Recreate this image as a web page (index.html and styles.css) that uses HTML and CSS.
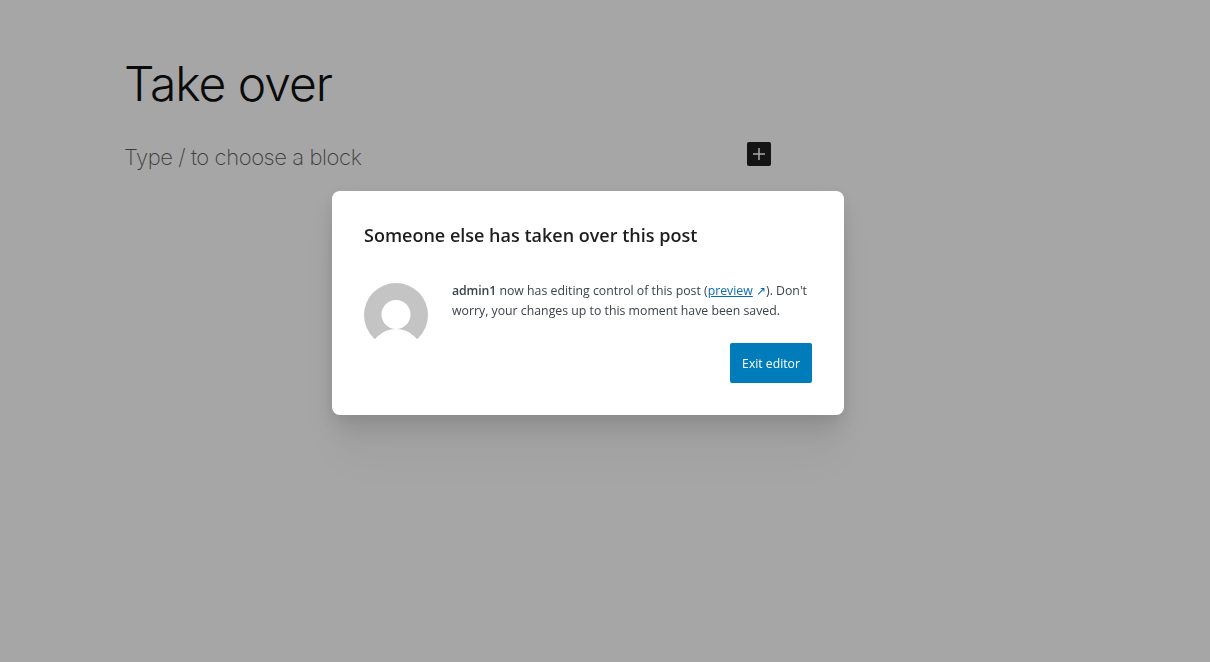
FILE: index.html
```html
<!DOCTYPE html>
<html lang="en">
<head>
<meta charset="utf-8">
<title>Take over</title>
<link rel="stylesheet" href="styles.css">
</head>
<body>
<main class="editor">
  <h1 class="post-title">Take over</h1>
  <div class="block-row">
    <p class="placeholder">Type / to choose a block</p>
    <button class="inserter" aria-label="Add block">
      <svg width="24" height="24" viewBox="0 0 24 24"><path d="M11.25 6h1.5v5.25H18v1.5h-5.25V18h-1.5v-5.25H6v-1.5h5.25z" fill="currentColor"/></svg>
    </button>
  </div>
</main>
<div class="overlay">
  <section class="modal">
    <h2 class="modal-title">Someone else has taken over this post</h2>
    <div class="modal-body">
      <svg class="avatar" width="64" height="64" viewBox="0 0 64 64">
        <circle cx="32" cy="32" r="32" fill="#c4c4c4"/>
        <circle cx="32" cy="31.5" r="14.5" fill="#fff"/>
        <circle cx="32" cy="73" r="27" fill="#fff"/>
      </svg>
      <p class="message"><strong>admin1</strong> now has editing control of this post (<a class="preview" href="#">preview</a> <span class="ext">↗</span>). Don't worry, your changes up to this moment have been saved.</p>
    </div>
    <div class="actions"><button class="exit">Exit editor</button></div>
  </section>
</div>
</body>
</html>
```
FILE: styles.css
```css
html, body { margin: 0; height: 100%; }
body { background: #a6a6a6; overflow: hidden; font-family: "Open Sans", "Noto Sans", sans-serif; }
.editor { padding: 54px 0 0 124px; width: 647px; }
.post-title { margin: 0; font: 300 48px/60px Inter, sans-serif; letter-spacing: -1.05px; color: #0a0a0a; }
.block-row { display: flex; align-items: center; justify-content: space-between; margin-top: 16px; height: 54px; }
.placeholder { margin: 0; font: 200 22px/32px Inter, sans-serif; letter-spacing: -0.42px; color: #3c3c3c; }
.inserter { width: 24px; height: 24px; padding: 0; border: 0; border-radius: 2px; background: #141414; color: #a6a6a6; display: flex; position: relative; top: -3px; }
.overlay { position: fixed; left: 332px; top: 191px; }
.modal { width: 512px; height: 224px; box-sizing: border-box; padding: 31px 32px 32px; background: #fff; border-radius: 8px; box-shadow: 0 5px 15px rgba(0,0,0,.08), 0 15px 27px rgba(0,0,0,.07), 0 30px 36px rgba(0,0,0,.04), 0 50px 43px rgba(0,0,0,.02); }
.modal-title { margin: 0; font-size: 18px; line-height: 26px; font-weight: 600; color: #1e1e1e; }
.modal-body { display: flex; gap: 24px; margin-top: 35px; height: 60px; }
.avatar { flex: none; }
.message { margin: -2px 0 0; font-size: 12.3px; line-height: 20px; color: #3c434a; }
.message strong { font-weight: 600; letter-spacing: -0.1px; }
.preview { color: #0a6cb0; }
.ext { color: #0a6cb0; font-size: 12px; }
.actions { display: flex; justify-content: flex-end; }
.exit { width: 82px; height: 40px; border: 0; border-radius: 2px; background: #007cba; color: #fff; font: 500 12.2px "Open Sans", sans-serif; padding: 0; }
```
